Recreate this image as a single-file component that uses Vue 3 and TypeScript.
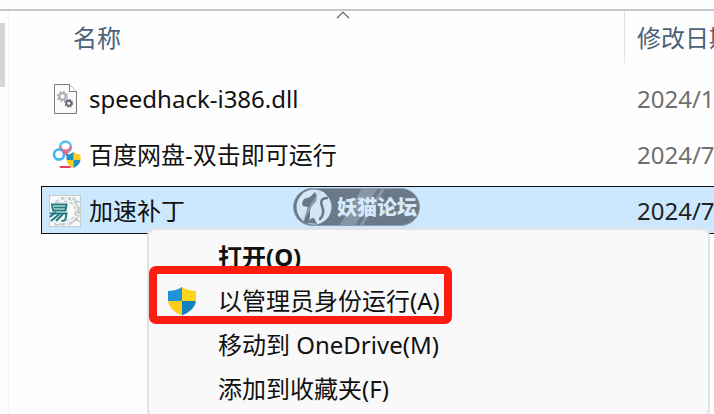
<script setup lang="ts">
import { ref } from 'vue'

interface FileRow {
  name: string
  date: string
  icon: 'dll' | 'netdisk' | 'patch'
}

interface MenuItem {
  label: string
  primary?: boolean
  shield?: boolean
}

const files: FileRow[] = [
  { name: 'speedhack-i386.dll', date: '2024/1', icon: 'dll' },
  { name: '百度网盘-双击即可运行', date: '2024/7', icon: 'netdisk' },
  { name: '加速补丁', date: '2024/7', icon: 'patch' },
]

const selected = ref(2)

const menu: MenuItem[] = [
  { label: '打开(O)', primary: true },
  { label: '以管理员身份运行(A)', shield: true },
  { label: '移动到 OneDrive(M)' },
  { label: '添加到收藏夹(F)' },
]
</script>

<template>
  <main class="explorer">
    <aside class="rail"><div class="thumb"></div></aside>
    <section class="list">
      <svg class="sort" viewBox="0 0 14 8" aria-hidden="true">
        <path d="M1 7.2 7 1.2 13 7.2" fill="none" stroke="#444" stroke-width="1.1" />
      </svg>
      <table class="files">
        <colgroup>
          <col class="col-name" />
          <col />
        </colgroup>
        <thead>
          <tr>
            <th scope="col"><div class="head head-name">名称</div></th>
            <th scope="col"><div class="head head-date">修改日期</div></th>
          </tr>
        </thead>
        <tbody>
          <tr
            v-for="(file, i) in files"
            :key="file.name"
            :class="{ selected: selected === i }"
            @click="selected = i"
          >
            <td>
              <div class="name">
                <span class="icon">
                  <svg v-if="file.icon === 'dll'" width="32" height="32" viewBox="0 0 32 32">
                    <path d="M5.500 1.500H20.500L27.500 8.500V30.500H5.500Z" fill="#fafafa" stroke="#7c7c7c" />
                    <path d="M20.500 1.500V8.500H27.500" fill="#fff" stroke="#7c7c7c" />
                    <circle cx="13.500" cy="13.500" r="3.200" fill="none" stroke="#a4acb8" stroke-width="2" />
                    <circle cx="13.500" cy="13.500" r="4.800" fill="none" stroke="#a4acb8" stroke-width="1.500" stroke-dasharray="2 1.770" />
                    <circle cx="19.800" cy="20.300" r="2.500" fill="none" stroke="#686c72" stroke-width="1.900" />
                    <circle cx="19.800" cy="20.300" r="3.700" fill="none" stroke="#686c72" stroke-width="1.400" stroke-dasharray="1.500 1.406" />
                  </svg>
                  <svg v-else-if="file.icon === 'netdisk'" width="32" height="32" viewBox="0 0 32 32">
                    <circle cx="16.500" cy="8" r="5.400" fill="#fff" stroke="#58c3f2" stroke-width="2.600" />
                    <path d="M11.200 7.500a5.400 5.400 0 0 0 10.600 0" fill="none" stroke="#f0718a" stroke-width="2.600" />
                    <circle cx="10" cy="15.500" r="5" fill="#fff" stroke="#3fb3ee" stroke-width="2.600" />
                    <path d="M13.500 12q4 1 5 5" fill="none" stroke="#ef5f7c" stroke-width="2.600" />
                    <path d="M11.500 28H21" stroke="#e83e68" stroke-width="1.800" stroke-linecap="round" />
                    <path d="M24.500 13q3 2.500 7 2.500V21H24.500Z" fill="#f6ce23" />
                    <path d="M24.500 13q-3 2.500-7 2.500V21h7Z" fill="#258fc4" />
                    <path d="M17.500 21q1 5.500 7 8V21Z" fill="#f6ce23" />
                    <path d="M31.500 21q-1 5.500-7 8V21Z" fill="#258fc4" />
                  </svg>
                  <svg v-else width="32" height="32" viewBox="0 0 32 32">
                    <rect x=".5" y=".5" width="31" height="31" fill="#f8fafa" stroke="#c6cbce" />
                    <g fill="none" stroke="#c4caca">
                      <circle cx="17" cy="16" r="13" stroke-width="3" stroke-dasharray="3 1 1 2" />
                      <circle cx="17" cy="16" r="9.500" stroke-width="1.500" stroke-dasharray="4 2" />
                      <path d="M24 2l3 4 4 1M23 27l4-3 4 3M27 9l3 5-4 5 4 3M3 25l4 5 6-1" stroke-width="1.500" />
                    </g>
                    <path d="M1 8H19V24L15 28H1Z" fill="#f8fafa" />
                    <g fill="none" stroke="#23797d" stroke-width="2">
                      <path d="M3 9.500H17.500L16.500 15.500H4ZM5 12.500H16" />
                      <path d="M1 18.500H17.500L16.500 24q-.5 2-4 2" />
                      <path d="M7 17L1 22M10.500 19L2 26M14 19L7 26" />
                    </g>
                  </svg>
                </span>
                <span>{{ file.name }}</span>
              </div>
            </td>
            <td class="date">{{ file.date }}</td>
          </tr>
        </tbody>
      </table>
    </section>

    <div class="watermark">
      <svg class="streaks" viewBox="0 0 126 38" preserveAspectRatio="none" aria-hidden="true">
        <path d="M68 0H84L62 38H46ZM88 0H92L70 38H66Z" fill="#8696a5" />
      </svg>
      <svg class="cat" width="36" height="36" viewBox="0 0 36 36" aria-hidden="true">
        <circle cx="18" cy="18" r="17.500" fill="#d2e6f7" />
        <path d="M6 14l2-4 6-2 5-5 2 4-1 5c-2 3-6 6-6 11 0 4 0 8-2 12l-4-2c1-6 2-10 4-15l-5-1Z" fill="#697988" />
        <path d="M12 34c1-3 3-5 6-5l3 6Z" fill="#697988" />
        <path d="M31 9c-5 0-7 3-5 8 2 5 2 9-2 13" fill="none" stroke="#697988" stroke-width="2.500" stroke-linecap="round" />
        <path d="M24 2L6 32" stroke="#b4c8d8" stroke-width="2" opacity=".5" />
      </svg>
      <span class="brand">妖猫论坛</span>
    </div>

    <div class="menu" role="menu">
      <button
        v-for="item in menu"
        :key="item.label"
        type="button"
        role="menuitem"
        class="item"
        :class="{ primary: item.primary, marked: item.shield }"
      >
        <span class="item-icon">
          <svg v-if="item.shield" width="30" height="30" viewBox="0 0 30 30">
            <path d="M15 1Q9 5 1 5V15H15Z" fill="#1d94d6" />
            <path d="M15 1Q21 5 29 5V15H15Z" fill="#fdd61c" />
            <path d="M1 15Q2 24 15 29.500V15Z" fill="#fdcb18" />
            <path d="M29 15Q28 24 15 29.500V15Z" fill="#1480be" />
          </svg>
        </span>
        <span>{{ item.label }}</span>
      </button>
    </div>
  </main>
</template>

<style>
body {
  margin: 0;
  background: #fefefe;
}
</style>

<style scoped>
.explorer {
  position: relative;
  display: flex;
  box-sizing: border-box;
  height: 100vh;
  padding-top: 9px;
  overflow: hidden;
  background: #fefefe;
  color: #111;
  font-family: "Noto Sans", "Noto Sans CJK SC", sans-serif;
  font-size: 24px;
  line-height: 32px;
}
.explorer::before {
  content: "";
  position: absolute;
  top: 9px;
  left: 0;
  right: 0;
  height: 2px;
  background: #c2c8ce;
}
.rail {
  flex: none;
  box-sizing: border-box;
  width: 9px;
  padding-top: 14px;
  border-right: 1px solid #f3f3f3;
}
.thumb {
  width: 5px;
  height: 64px;
  background: #d6d6d6;
}
.list {
  position: relative;
  flex: 1;
  min-width: 0;
  padding: 2px 0 0 32px;
  overflow: hidden;
}
.sort {
  position: absolute;
  top: 2px;
  left: 327px;
  width: 14px;
  height: 8px;
}
.files {
  width: 100%;
  margin-top: -8px;
  table-layout: fixed;
  border-collapse: separate;
  border-spacing: 0 8px;
}
.col-name {
  width: 584px;
}
th,
td {
  box-sizing: border-box;
  padding: 0;
  overflow: hidden;
  text-align: left;
  white-space: nowrap;
}
th {
  height: 55px;
  vertical-align: top;
  font-weight: 400;
  color: #4c607a;
}
.head {
  box-sizing: border-box;
  height: 52px;
  padding: 11px 0 9px 32px;
}
.head-name {
  border-right: 1px solid #dfe2e6;
}
.head-date {
  padding-left: 12px;
}
td {
  height: 48px;
  padding-top: 2px;
  border: 1px solid transparent;
  border-width: 1px 0;
}
td:first-child {
  border-left-width: 1px;
}
.name {
  display: flex;
  align-items: center;
  gap: 8px;
  padding-left: 7px;
}
.icon {
  display: flex;
}
.date {
  padding-left: 12px;
  color: #707070;
}
.selected td {
  border-color: #111;
  background: #cce8ff;
}
.selected .date {
  color: #222;
}
.watermark {
  position: absolute;
  top: 188px;
  left: 293px;
  display: flex;
  align-items: center;
  gap: 5px;
  box-sizing: border-box;
  width: 127px;
  height: 38px;
  padding-left: 2px;
  overflow: hidden;
  border: 1px solid #8d9dac;
  border-radius: 19px;
  background: #697988;
}
.streaks {
  position: absolute;
  inset: 0;
  width: 100%;
  height: 100%;
}
.cat {
  position: relative;
  flex: none;
}
.brand {
  position: relative;
  color: #d7eafa;
  font-family: "Noto Sans CJK SC", sans-serif;
  font-size: 20px;
  font-weight: 900;
  line-height: 28px;
  white-space: nowrap;
}
.menu {
  position: absolute;
  top: 228px;
  left: 147px;
  right: 4px;
  display: flex;
  flex-direction: column;
  box-sizing: border-box;
  padding: 5px 0;
  border: 2px solid #e0e2e5;
  border-radius: 8px;
  background: #f9f9fa;
}
.item {
  position: relative;
  display: flex;
  align-items: center;
  height: 44px;
  padding: 0 0 0 18px;
  border: 0;
  background: none;
  color: #111;
  font: inherit;
  text-align: left;
  white-space: nowrap;
}
.item-icon {
  display: flex;
  width: 51px;
}
.item.primary {
  font-weight: 700;
}
.marked {
  z-index: 1;
}
.marked::after {
  content: "";
  position: absolute;
  top: -13px;
  left: 0;
  box-sizing: border-box;
  width: 303px;
  height: 58px;
  border: 8px solid #fc1c10;
  border-radius: 7px;
}
</style>
